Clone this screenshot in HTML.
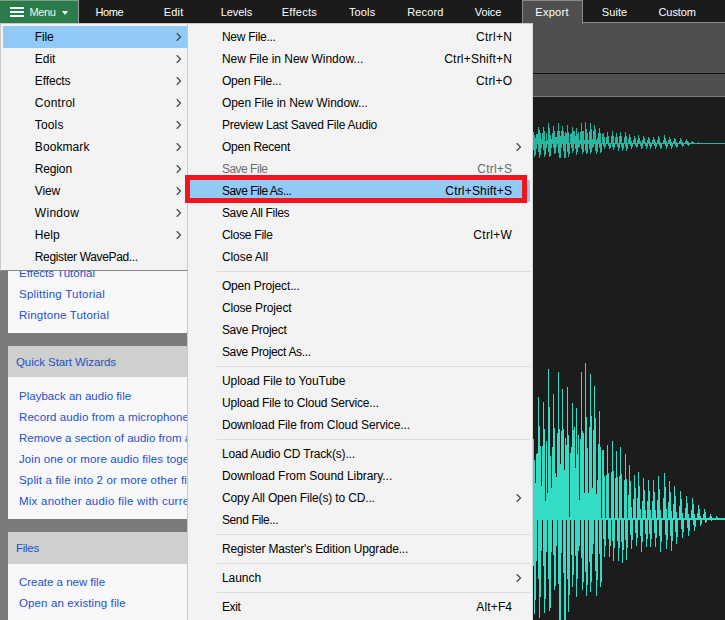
<!DOCTYPE html>
<html><head><meta charset="utf-8"><title>WavePad</title>
<style>
html,body{margin:0;padding:0}
body{width:725px;height:620px;overflow:hidden;position:relative;background:#1c1c1c;font-family:"Liberation Sans",sans-serif;font-size:12px;color:#000}
div,span{position:absolute;white-space:nowrap;box-sizing:border-box}
.t{color:#fff;font-size:11px;top:0;height:23px;line-height:25px}
.mn{color:#f4f4e0;font-size:11px;top:0;height:23px;line-height:24px}
.mi{left:34.8px;height:22px;line-height:22px;font-size:12px;color:#000}
.si{left:221.9px;height:22px;line-height:22px;font-size:12px;color:#000}
.sc{height:22px;line-height:22px;font-size:12px;color:#000}
.dis{color:#6d6d6d}
.sep{left:217px;width:313px;height:1px;background:#dbdbdb}
.lk{left:19px;color:#2450c8;font-size:11.5px;height:21px;line-height:21px}
.hd{left:16px;color:#2450c8;font-size:11.5px;height:30px;line-height:30px}
.hb{left:8px;width:179px;background:#cdd0cd}
.bd{left:8px;width:179px;background:#7b7b7b}
svg{position:absolute;left:0;top:0}
</style></head><body>

<div style="left:0;top:0;width:725px;height:23px;background:#1b1b1b"></div>
<div style="left:533px;top:23px;width:192px;height:74px;background:#4f4f4f"></div>
<div style="left:583px;top:22px;width:142px;height:1px;background:#8a8a8a"></div>
<div style="left:533px;top:73px;width:192px;height:1px;background:#101010"></div>
<div style="left:533px;top:96px;width:192px;height:1px;background:#7a7a7a"></div>
<div style="left:533px;top:97px;width:192px;height:523px;background:#1c1c1c"></div>
<div style="left:522px;top:0;width:61px;height:24px;background:#4f4f4f;border:1px solid #8a8a8a;border-bottom:none"></div>
<div style="left:0;top:0;width:79px;height:23px;background:#2a7c4a;border-top:1px solid #7fa08c;border-right:1px solid #9a9aa8"></div>
<div style="left:10px;top:7px;width:14px;height:2px;background:#fff"></div><div style="left:10px;top:11px;width:14px;height:2px;background:#fff"></div><div style="left:10px;top:15px;width:14px;height:2px;background:#fff"></div>
<span class="mn" style="left:29.4px;letter-spacing:-0.383px">Menu</span>
<div style="left:62px;top:11px;width:0;height:0;border-left:3.5px solid transparent;border-right:3.5px solid transparent;border-top:4px solid #fff"></div>
<span class="t" style="left:95.5px;letter-spacing:-0.386px">Home</span>
<span class="t" style="left:163.8px;letter-spacing:0.183px">Edit</span>
<span class="t" style="left:220.7px;letter-spacing:-0.066px">Levels</span>
<span class="t" style="left:281.7px;letter-spacing:0.280px">Effects</span>
<span class="t" style="left:348.9px;letter-spacing:0.163px">Tools</span>
<span class="t" style="left:407.2px;letter-spacing:0.139px">Record</span>
<span class="t" style="left:474.8px;letter-spacing:-0.084px">Voice</span>
<span class="t" style="left:535.3px;letter-spacing:0.284px">Export</span>
<span class="t" style="left:601.8px;letter-spacing:0.064px">Suite</span>
<span class="t" style="left:658.5px;letter-spacing:-0.084px">Custom</span>
<div style="left:0;top:23px;width:8px;height:597px;background:#7b7b7b"></div>
<div style="left:8px;top:23px;width:180px;height:597px;background:#f8f8fa"></div>
<span class="lk" style="top:263px;letter-spacing:0.015px">Effects Tutorial</span>
<span class="lk" style="top:284px;letter-spacing:0.232px">Splitting Tutorial</span>
<span class="lk" style="top:305px;letter-spacing:0.191px">Ringtone Tutorial</span>
<div class="bd" style="top:333px;height:13px"></div><div class="hb" style="top:346px;height:31px"></div>
<span class="hd" style="top:347px;letter-spacing:-0.090px">Quick Start Wizards</span>
<span class="lk" style="top:386px;letter-spacing:0.010px">Playback an audio file</span>
<span class="lk" style="top:407px;letter-spacing:0.081px">Record audio from a microphone</span>
<span class="lk" style="top:428px;letter-spacing:0.005px">Remove a section of audio from a file</span>
<span class="lk" style="top:449px;letter-spacing:0.104px">Join one or more audio files together</span>
<span class="lk" style="top:470px;letter-spacing:0.157px">Split a file into 2 or more other files</span>
<span class="lk" style="top:491px;letter-spacing:0.242px">Mix another audio file with current file</span>
<div class="bd" style="top:519px;height:13px"></div><div class="hb" style="top:532px;height:32px"></div>
<span class="hd" style="top:533px;letter-spacing:-0.256px">Files</span>
<span class="lk" style="top:572px;letter-spacing:-0.017px">Create a new file</span>
<span class="lk" style="top:593px;letter-spacing:0.124px">Open an existing file</span>
<svg width="725" height="620" viewBox="0 0 725 620" shape-rendering="crispEdges"><path d="M533.5 132.2V150.0M534.5 135.0V157.1M535.5 138.1V155.0M536.5 134.2V149.2M537.5 134.1V144.0M538.5 126.5V151.9M539.5 130.4V157.7M540.5 133.1V154.5M541.5 138.5V147.7M542.5 133.1V144.0M543.5 127.2V150.0M544.5 130.8V156.9M545.5 140.6V154.8M546.5 132.5V147.9M547.5 139.5V144.0M548.5 122.8V151.9M549.5 127.9V156.6M550.5 134.5V156.2M551.5 138.8V147.9M552.5 133.3V144.0M553.5 126.1V148.3M554.5 130.7V153.5M555.5 136.8V152.9M556.5 137.3V147.0M557.5 131.4V144.0M558.5 123.2V152.6M559.5 130.8V157.9M560.5 135.6V157.9M561.5 131.1V148.0M562.5 125.5V144.0M563.5 130.8V151.0M564.5 136.4V157.9M565.5 132.1V157.9M566.5 133.0V144.0M567.5 125.2V151.9M568.5 131.7V156.8M569.5 142.7V154.2M570.5 134.1V144.0M571.5 133.3V148.3M572.5 127.3V153.1M573.5 131.0V151.3M574.5 130.6V144.0M575.5 136.1V148.5M576.5 128.0V154.5M577.5 134.2V151.9M578.5 131.7V147.7M579.5 140.4V147.0M580.5 132.2V144.0M581.5 123.2V148.8M582.5 131.1V153.5M583.5 131.4V152.3M584.5 139.5V144.0M585.5 121.9V150.8M586.5 129.2V154.4M587.5 133.4V152.8M588.5 139.5V144.0M589.5 130.6V149.4M590.5 123.4V153.8M591.5 129.1V152.3M592.5 138.8V148.2M593.5 131.0V146.7M594.5 125.0V144.0M595.5 129.4V150.7M596.5 139.6V154.4M597.5 137.7V152.0M598.5 132.9V144.0M599.5 128.4V148.2M600.5 133.3V153.1M601.5 142.9V152.4M602.5 133.5V144.0M603.5 133.4V146.1M604.5 137.0V148.9M605.5 142.9V147.2M606.5 136.7V144.0M607.5 132.4V144.0M608.5 136.3V146.3M609.5 142.9V149.3M610.5 142.9V147.5M611.5 136.0V144.0M612.5 131.3V146.8M613.5 135.8V150.2M614.5 142.8V148.1M615.5 136.7V144.0M616.5 132.5V144.0M617.5 136.5V147.0M618.5 142.8V150.6M619.5 136.2V148.3M620.5 131.6V144.0M621.5 135.8V147.3M622.5 142.8V151.3M623.5 142.8V148.9M624.5 136.6V144.0M625.5 132.3V147.1M626.5 136.4V151.0M627.5 142.8V148.7M628.5 139.0V144.0M629.5 134.1V144.0M630.5 136.7V146.1M631.5 141.0V148.8M632.5 142.8V147.1M633.5 139.7V144.0M634.5 135.7V144.0M635.5 137.9V145.7M636.5 142.8V148.3M637.5 139.5V146.7M638.5 135.2V144.0M639.5 137.6V144.0M640.5 141.3V146.3M641.5 142.8V149.4M642.5 140.0V147.5M643.5 136.2V144.0M644.5 138.2V144.0M645.5 141.5V145.9M646.5 142.8V148.5M647.5 140.0V146.9M648.5 136.6V144.0M649.5 138.4V145.9M650.5 141.5V148.5M651.5 142.8V146.9M652.5 140.0V144.0M653.5 136.6V144.0M654.5 138.5V145.7M655.5 141.5V148.5M656.5 142.8V146.7M657.5 139.9V144.0M658.5 135.9V144.0M659.5 138.1V146.3M660.5 141.5V149.4M661.5 142.8V147.5M662.5 142.8V144.0M663.5 139.5V144.0M664.5 135.4V144.0M665.5 137.7V146.1M666.5 141.3V148.8M667.5 142.8V147.1M668.5 140.2V144.0M669.5 136.7V144.0M670.5 138.5V146.3M671.5 141.7V149.2M672.5 142.8V147.3M673.5 140.5V144.0M674.5 137.6V144.0M675.5 139.2V145.5M676.5 141.8V147.9M677.5 142.8V146.5M678.5 142.8V144.0M679.5 140.9V144.0M680.5 138.4V144.0M681.5 139.7V144.9M682.5 142.0V146.7M683.5 142.8V145.5M684.5 142.8V144.0M685.5 141.2V144.0M686.5 139.2V144.0M687.5 140.5V144.7M688.5 142.3V145.9M689.5 142.9V144.9M690.5 142.9V144.0M691.5 142.0V144.0M692.5 140.8V144.0M693.5 141.5V144.0M694.5 142.6V144.2M695.5 142.9V144.0M696.5 142.9V144.0M697.5 142.7V144.0M698.5 142.3V144.0M699.5 142.6V144.0M700.5 142.9V144.0M701.5 143.0V144.0M702.5 143.0V144.0M703.5 143.0V144.0M704.5 143.0V144.0M705.5 143.0V144.0M706.5 143.0V144.0M707.5 143.0V144.0M708.5 143.0V144.0M709.5 143.0V144.0M710.5 143.0V144.0M711.5 143.0V144.0M712.5 143.0V144.0M713.5 143.0V144.0M714.5 143.0V144.0M715.5 143.0V144.0M716.5 143.0V144.0M717.5 143.0V144.0M718.5 143.0V144.0M719.5 143.0V144.0M720.5 143.0V144.0M721.5 143.0V144.0M722.5 143.0V144.0M723.5 143.0V144.0M724.5 143.0V144.0" stroke="#2bb6a2" stroke-width="1" fill="none"/><path d="M700 143.5H725" stroke="#2bb6a2" stroke-width="1"/><path d="M533.5 439V566M534.5 460V614M535.5 483V600M536.5 454V561M537.5 453V520M538.5 397V579M539.5 426V618M540.5 446V597M541.5 486V551M542.5 446V520M543.5 402V566M544.5 429V613M545.5 501V599M546.5 441V552M547.5 493V520M548.5 369V579M549.5 407V611M550.5 456V608M551.5 488V552M552.5 447V520M553.5 394V555M554.5 428V590M555.5 473V586M556.5 477V546M557.5 433V520M558.5 372V584M559.5 429V620M560.5 464V620M561.5 431V553M562.5 389V520M563.5 429V573M564.5 470V620M565.5 438V620M566.5 445V520M567.5 387V579M568.5 435V612M569.5 517V595M570.5 453V520M571.5 447V555M572.5 403V587M573.5 430V575M574.5 427V520M575.5 468V556M576.5 408V597M577.5 454V579M578.5 435V551M579.5 500V546M580.5 439V520M581.5 372V558M582.5 431V590M583.5 433V582M584.5 493V520M585.5 363V572M586.5 417V596M587.5 448V585M588.5 493V520M589.5 427V562M590.5 374V592M591.5 416V582M592.5 488V554M593.5 430V544M594.5 386V520M595.5 418V571M596.5 494V596M597.5 480V580M598.5 444V520M599.5 411V554M600.5 447V587M601.5 518V582M602.5 450V520M603.5 450V539M604.5 476V557M605.5 518V546M606.5 475V520M607.5 445V520M608.5 473V539M609.5 518V557M610.5 518V546M611.5 472V520M612.5 441V541M613.5 471V561M614.5 518V548M615.5 478V520M616.5 451V520M617.5 477V541M618.5 518V561M619.5 476V548M620.5 447V520M621.5 474V542M622.5 518V563M623.5 518V550M624.5 480V520M625.5 454V540M626.5 479V560M627.5 518V548M628.5 495V520M629.5 465V520M630.5 481V535M631.5 507V549M632.5 518V540M633.5 499V520M634.5 475V520M635.5 488V533M636.5 518V546M637.5 498V538M638.5 472V520M639.5 486V520M640.5 509V536M641.5 518V552M642.5 501V542M643.5 478V520M644.5 490V520M645.5 510V534M646.5 518V547M647.5 501V539M648.5 480V520M649.5 491V534M650.5 510V547M651.5 518V539M652.5 501V520M653.5 480V520M654.5 492V533M655.5 510V547M656.5 518V538M657.5 500V520M658.5 476V520M659.5 489V536M660.5 510V552M661.5 518V542M662.5 518V520M663.5 498V520M664.5 473V520M665.5 487V535M666.5 509V549M667.5 518V540M668.5 502V520M669.5 481V520M670.5 492V536M671.5 511V551M672.5 518V541M673.5 504V520M674.5 486V520M675.5 496V532M676.5 512V544M677.5 518V537M678.5 518V520M679.5 506V520M680.5 491V520M681.5 499V529M682.5 513V538M683.5 518V532M684.5 518V520M685.5 508V520M686.5 496V520M687.5 503V528M688.5 514V536M689.5 518V531M690.5 518V520M691.5 510V520M692.5 498V520M693.5 504V525M694.5 514V531M695.5 518V527M696.5 518V520M697.5 513V520M698.5 505V520M699.5 509V520M700.5 516V526M701.5 518V524M702.5 518V520M703.5 514V520M704.5 509V520M705.5 512V523M706.5 518V522M707.5 518V520M708.5 518V520M709.5 517V520M710.5 514V520M711.5 516V521M712.5 518V520M713.5 518V520M714.5 518V520M715.5 518V520M716.5 516V520M717.5 517V520M718.5 518V520M719.5 518V520M720.5 518V520M721.5 518V520M722.5 518V520M723.5 518V520M724.5 518V520" stroke="#34dcc6" stroke-width="1" fill="none"/></svg>
<div style="left:187px;top:23px;width:346px;height:600px;background:#f3f3f3;border:1px solid #c9c9c9;border-right-color:#d8d8d8"></div>
<span class="si" style="top:26px;letter-spacing:-0.263px">New File...</span>
<span class="sc" style="left:476.0px;top:26px;letter-spacing:0.309px">Ctrl+N</span>
<span class="si" style="top:48px;letter-spacing:-0.026px">New File in New Window...</span>
<span class="sc" style="left:444.2px;top:48px;letter-spacing:0.220px">Ctrl+Shift+N</span>
<span class="si" style="top:70px;letter-spacing:-0.219px">Open File...</span>
<span class="sc" style="left:476.0px;top:70px;letter-spacing:0.197px">Ctrl+O</span>
<span class="si" style="top:92px;letter-spacing:-0.054px">Open File in New Window...</span>
<span class="si" style="top:114px;letter-spacing:-0.241px">Preview Last Saved File Audio</span>
<span class="si" style="top:136px;letter-spacing:-0.229px">Open Recent</span>
<svg style="left:515px;top:142px" width="8" height="10" viewBox="0 0 8 10"><path d="M1.7 1.3L5.5 5L1.7 8.7" stroke="#444" stroke-width="1.2" fill="none"/></svg>
<span class="si dis" style="top:158px;letter-spacing:-0.492px">Save File</span>
<span class="sc dis" style="left:477.3px;top:158px;letter-spacing:0.202px">Ctrl+S</span>
<div style="left:189px;top:180px;width:341px;height:22px;background:#91c9f7"></div>
<span class="si" style="top:180px;letter-spacing:-0.474px">Save File As...</span>
<span class="sc" style="left:445.3px;top:180px;letter-spacing:0.183px">Ctrl+Shift+S</span>
<span class="si" style="top:202px;letter-spacing:-0.331px">Save All Files</span>
<span class="si" style="top:224px;letter-spacing:-0.256px">Close File</span>
<span class="sc" style="left:473.3px;top:224px;letter-spacing:0.317px">Ctrl+W</span>
<span class="si" style="top:246px;letter-spacing:-0.065px">Close All</span>
<div class="sep" style="top:271px"></div>
<span class="si" style="top:275px;letter-spacing:-0.150px">Open Project...</span>
<span class="si" style="top:297px;letter-spacing:-0.137px">Close Project</span>
<span class="si" style="top:319px;letter-spacing:-0.287px">Save Project</span>
<span class="si" style="top:341px;letter-spacing:-0.323px">Save Project As...</span>
<div class="sep" style="top:366px"></div>
<span class="si" style="top:370px;letter-spacing:-0.041px">Upload File to YouTube</span>
<span class="si" style="top:392px;letter-spacing:-0.164px">Upload File to Cloud Service...</span>
<span class="si" style="top:414px;letter-spacing:-0.092px">Download File from Cloud Service...</span>
<div class="sep" style="top:439px"></div>
<span class="si" style="top:443px;letter-spacing:-0.176px">Load Audio CD Track(s)...</span>
<span class="si" style="top:465px;letter-spacing:-0.052px">Download From Sound Library...</span>
<span class="si" style="top:487px;letter-spacing:-0.150px">Copy All Open File(s) to CD...</span>
<svg style="left:515px;top:493px" width="8" height="10" viewBox="0 0 8 10"><path d="M1.7 1.3L5.5 5L1.7 8.7" stroke="#444" stroke-width="1.2" fill="none"/></svg>
<span class="si" style="top:509px;letter-spacing:-0.367px">Send File...</span>
<div class="sep" style="top:534px"></div>
<span class="si" style="top:538px;letter-spacing:-0.169px">Register Master's Edition Upgrade...</span>
<div class="sep" style="top:563px"></div>
<span class="si" style="top:567px;letter-spacing:-0.029px">Launch</span>
<svg style="left:515px;top:573px" width="8" height="10" viewBox="0 0 8 10"><path d="M1.7 1.3L5.5 5L1.7 8.7" stroke="#444" stroke-width="1.2" fill="none"/></svg>
<div class="sep" style="top:592px"></div>
<span class="si" style="top:596px;letter-spacing:-0.354px">Exit</span>
<span class="sc" style="left:476.3px;top:596px;letter-spacing:0.147px">Alt+F4</span>
<div style="left:0;top:23px;width:188px;height:248px;background:#f3f3f3;border:1px solid #c9c9c9;border-bottom-color:#888"></div>
<div style="left:3px;top:26px;width:184px;height:22px;background:#91c9f7"></div>
<span class="mi" style="top:26px;letter-spacing:-0.136px">File</span>
<svg style="left:175px;top:32px" width="8" height="10" viewBox="0 0 8 10"><path d="M1.7 1.3L5.5 5L1.7 8.7" stroke="#444" stroke-width="1.2" fill="none"/></svg>
<span class="mi" style="top:48px;letter-spacing:-0.022px">Edit</span>
<svg style="left:175px;top:54px" width="8" height="10" viewBox="0 0 8 10"><path d="M1.7 1.3L5.5 5L1.7 8.7" stroke="#444" stroke-width="1.2" fill="none"/></svg>
<span class="mi" style="top:70px;letter-spacing:-0.124px">Effects</span>
<svg style="left:175px;top:76px" width="8" height="10" viewBox="0 0 8 10"><path d="M1.7 1.3L5.5 5L1.7 8.7" stroke="#444" stroke-width="1.2" fill="none"/></svg>
<span class="mi" style="top:92px;letter-spacing:0.259px">Control</span>
<svg style="left:175px;top:98px" width="8" height="10" viewBox="0 0 8 10"><path d="M1.7 1.3L5.5 5L1.7 8.7" stroke="#444" stroke-width="1.2" fill="none"/></svg>
<span class="mi" style="top:114px;letter-spacing:0.157px">Tools</span>
<svg style="left:175px;top:120px" width="8" height="10" viewBox="0 0 8 10"><path d="M1.7 1.3L5.5 5L1.7 8.7" stroke="#444" stroke-width="1.2" fill="none"/></svg>
<span class="mi" style="top:136px;letter-spacing:0.084px">Bookmark</span>
<svg style="left:175px;top:142px" width="8" height="10" viewBox="0 0 8 10"><path d="M1.7 1.3L5.5 5L1.7 8.7" stroke="#444" stroke-width="1.2" fill="none"/></svg>
<span class="mi" style="top:158px;letter-spacing:-0.155px">Region</span>
<svg style="left:175px;top:164px" width="8" height="10" viewBox="0 0 8 10"><path d="M1.7 1.3L5.5 5L1.7 8.7" stroke="#444" stroke-width="1.2" fill="none"/></svg>
<span class="mi" style="top:180px;letter-spacing:-0.124px">View</span>
<svg style="left:175px;top:186px" width="8" height="10" viewBox="0 0 8 10"><path d="M1.7 1.3L5.5 5L1.7 8.7" stroke="#444" stroke-width="1.2" fill="none"/></svg>
<span class="mi" style="top:202px;letter-spacing:0.302px">Window</span>
<svg style="left:175px;top:208px" width="8" height="10" viewBox="0 0 8 10"><path d="M1.7 1.3L5.5 5L1.7 8.7" stroke="#444" stroke-width="1.2" fill="none"/></svg>
<span class="mi" style="top:224px;letter-spacing:0.103px">Help</span>
<svg style="left:175px;top:230px" width="8" height="10" viewBox="0 0 8 10"><path d="M1.7 1.3L5.5 5L1.7 8.7" stroke="#444" stroke-width="1.2" fill="none"/></svg>
<span class="mi" style="top:246px;letter-spacing:-0.348px">Register WavePad...</span>
<div style="left:185px;top:175px;width:342px;height:27.5px;border:5px solid #f5141c"></div>
</body></html>
